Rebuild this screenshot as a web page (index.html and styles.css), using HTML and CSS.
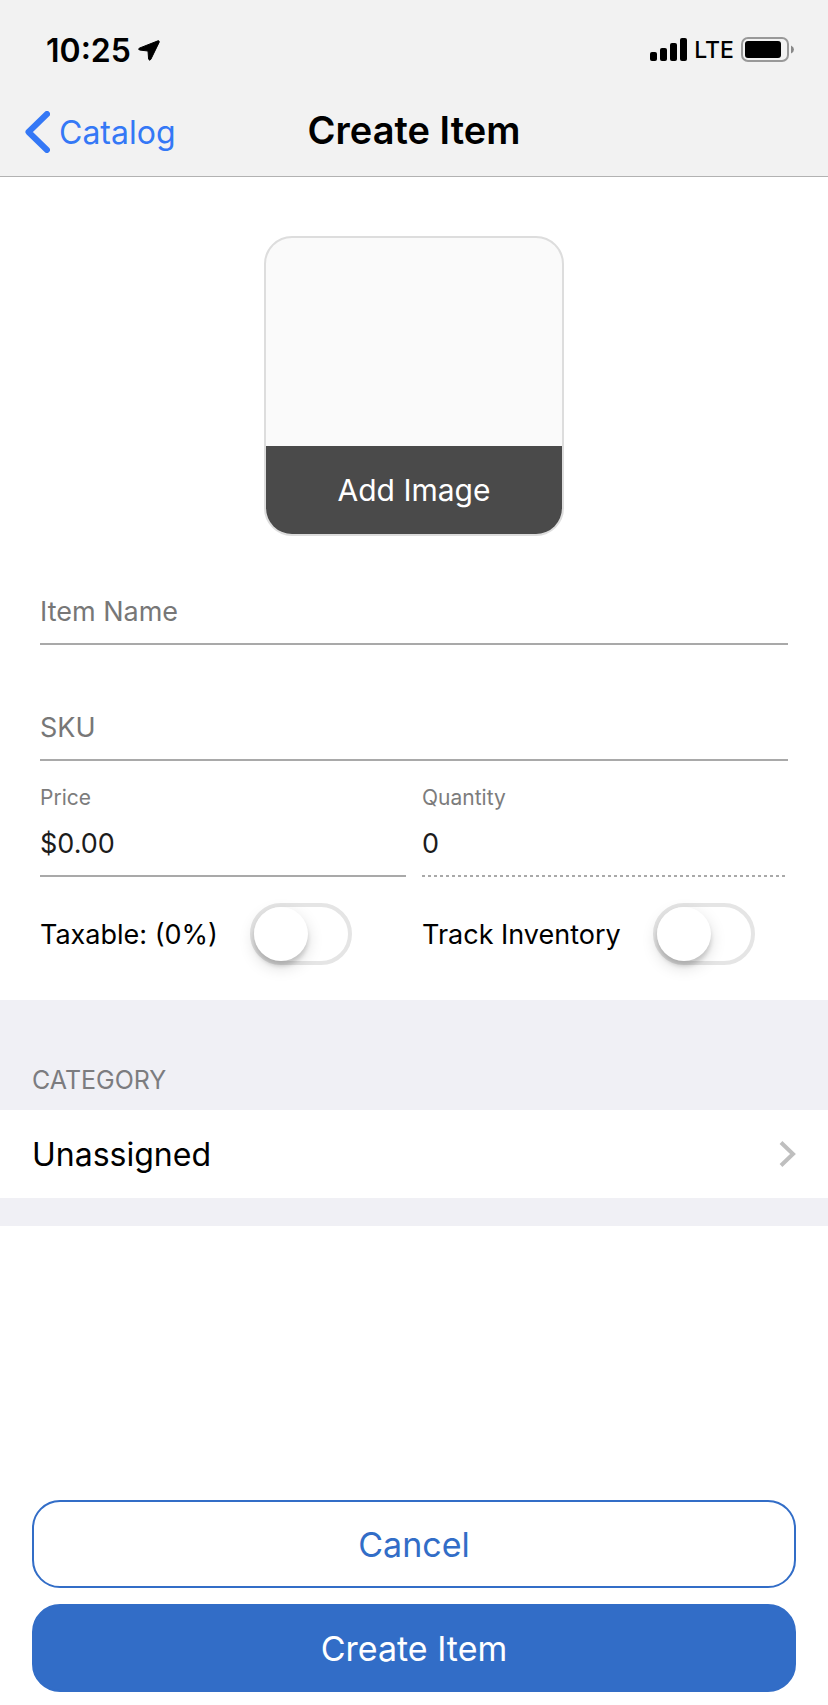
FILE: index.html
```
<!DOCTYPE html>
<html lang="en">
<head>
  <meta charset="utf-8">
  <meta name="viewport" content="width=device-width, initial-scale=1">
  <title>Create Item</title>
  <link rel="stylesheet" href="styles.css">
</head>
<body>
  <header class="top">
    <div class="status-bar">
      <div class="status-left">
        <span class="time">10:25</span>
        <svg class="location" width="22" height="21" viewBox="0 0 22 21">
          <path d="M20 .8 L1.2 8.2 Q0 9.2 1.4 10 L10 11 L10.6 19.2 Q11.6 21 12.8 19.4 L21.2 2.2 Q21.4 .4 20 .8z" stroke="#000" stroke-width="1" stroke-linejoin="round"/>
        </svg>
      </div>
      <div class="status-right">
        <svg width="37" height="24" viewBox="0 0 37 24">
          <rect x="0" y="14" width="7" height="9" rx="2"/>
          <rect x="10" y="10" width="7" height="13" rx="2"/>
          <rect x="20" y="5" width="7" height="18" rx="2"/>
          <rect x="30" y="0" width="7" height="23" rx="2"/>
        </svg>
        <span class="network">LTE</span>
        <svg width="53" height="26" viewBox="0 0 53 26">
          <rect x="1" y="1" width="46" height="23" rx="6" fill="none" stroke="#999" stroke-width="2"/>
          <rect x="4" y="4" width="36" height="17" rx="3"/>
          <path d="M50 8.5 Q53 10 53 12.5 Q53 15 50 16.5z" fill="#888"/>
        </svg>
      </div>
    </div>
    <nav class="nav-bar">
      <a class="back" href="#">
        <svg width="25" height="42" viewBox="0 0 25 42">
          <path d="M22 3 L3.5 21 L22 39" fill="none" stroke="#3478f6" stroke-width="6" stroke-linecap="round" stroke-linejoin="round"/>
        </svg>
        <span>Catalog</span>
      </a>
      <h1>Create Item</h1>
    </nav>
  </header>

  <main>
    <form class="item-form" id="item-form">
      <button class="photo" type="button"><span>Add Image</span></button>

      <div class="fields">
        <div class="field wide">
          <input type="text" aria-label="Item Name" placeholder="Item Name">
        </div>
        <div class="field wide">
          <input type="text" aria-label="SKU" placeholder="SKU">
        </div>
        <div class="field">
          <label for="price">Price</label>
          <input type="text" id="price" value="$0.00">
        </div>
        <div class="field">
          <label for="quantity">Quantity</label>
          <input class="dashed" type="text" id="quantity" value="0" readonly>
        </div>
        <div class="switch-row">
          <label for="taxable">Taxable: (0%)</label>
          <input class="switch" type="checkbox" role="switch" id="taxable">
        </div>
        <div class="switch-row">
          <label for="track">Track Inventory</label>
          <input class="switch" type="checkbox" role="switch" id="track">
        </div>
      </div>
    </form>

    <section class="category">
      <h2>CATEGORY</h2>
      <a class="category-row" href="#">
        <span>Unassigned</span>
        <svg width="17" height="28" viewBox="0 0 17 28">
          <path d="M2 2.5 L14 14 L2 25.5" fill="none" stroke="#bfbfbf" stroke-width="4"/>
        </svg>
      </a>
    </section>
  </main>

  <footer class="actions">
    <button class="btn" type="button">Cancel</button>
    <button class="btn btn-primary" type="submit" form="item-form">Create Item</button>
  </footer>
</body>
</html>
```
FILE: styles.css
```
* {
  box-sizing: border-box;
}

body {
  margin: 0;
  min-height: 100vh;
  display: flex;
  flex-direction: column;
  background: #fff;
  color: #000;
  font-family: Inter, "Liberation Sans", sans-serif;
}

button,
input {
  font: inherit;
}

a {
  text-decoration: none;
}

/* status bar + navigation */
.top {
  background: #f2f2f2;
  border-bottom: 1px solid #b2b2b2;
}

.status-bar {
  display: flex;
  justify-content: space-between;
  align-items: center;
  height: 88px;
  padding: 12px 34px 0 46px;
}

.status-left {
  display: flex;
  align-items: center;
  gap: 7px;
}

.status-right {
  display: flex;
  align-items: center;
  gap: 7px;
}

.time {
  font-size: 32px;
  font-weight: 600;
}

.network {
  font-size: 23px;
  font-weight: 500;
}

.nav-bar {
  display: grid;
  grid-template-columns: 1fr auto 1fr;
  align-items: center;
  height: 88px;
  padding: 0 25px;
}

.back {
  display: flex;
  align-items: center;
  gap: 9px;
  color: #3478f6;
  font-size: 32px;
}

.nav-bar h1 {
  margin: 0;
  padding-bottom: 4px;
  font-size: 38px;
  font-weight: 600;
}

/* item form */
.item-form {
  padding: 59px 40px 35px;
}

.photo {
  display: flex;
  flex-direction: column;
  justify-content: flex-end;
  width: 300px;
  height: 300px;
  margin: 0 auto 43px;
  padding: 0;
  overflow: hidden;
  background: #fafafa;
  border: 2px solid #ddd;
  border-radius: 28px;
}

.photo span {
  width: 100%;
  line-height: 88px;
  background: #4a4a4a;
  color: #fff;
  font-size: 30px;
}

.fields {
  display: grid;
  grid-template-columns: 1fr 1fr;
  column-gap: 16px;
}

.wide {
  grid-column: 1 / -1;
}

.wide + .wide {
  margin-top: 50px;
}

.field label {
  display: block;
  margin: 25px 0 1px;
  color: #7c7c7c;
  font-size: 21px;
  line-height: 24px;
}

.field input {
  display: block;
  width: 100%;
  height: 66px;
  padding: 0;
  border: 0;
  border-bottom: 2px solid #a9a9a9;
  border-radius: 0;
  outline: 0;
  background: none;
  color: #1c1c1c;
  font-size: 27px;
}

.field input::placeholder {
  color: #777;
  opacity: 1;
}

.field .dashed {
  border-bottom-color: transparent;
  background: repeating-linear-gradient(90deg, #a9a9a9 0 3px, transparent 3px 6px) bottom / 100% 2px no-repeat border-box;
}

.switch-row {
  display: flex;
  align-items: center;
  gap: 32px;
  margin-top: 26px;
  font-size: 27px;
}

/* toggle switch */
.switch {
  appearance: none;
  width: 102px;
  height: 62px;
  margin: 0;
  border: 4px solid #e5e5e5;
  border-radius: 31px;
  background: #fff;
}

.switch::before {
  content: "";
  display: block;
  width: 54px;
  height: 54px;
  border-radius: 50%;
  background: #fff;
  box-shadow: 0 6px 16px rgba(0, 0, 0, 0.15), 0 5px 4px rgba(0, 0, 0, 0.14);
}

.switch:checked {
  border-color: #3478f6;
  background: #3478f6;
}

.switch:checked::before {
  margin-left: 40px;
}

/* category */
.category {
  padding: 64px 0 28px;
  background: #f0f0f5;
}

.category h2 {
  margin: 0;
  padding: 0 32px 14px;
  color: #7c7c7f;
  font-size: 25px;
  font-weight: 400;
  line-height: 32px;
}

.category-row {
  display: flex;
  justify-content: space-between;
  align-items: center;
  height: 88px;
  padding: 0 32px;
  background: #fff;
  color: #000;
  font-size: 32px;
}

/* bottom buttons */
.actions {
  display: flex;
  flex-direction: column;
  gap: 16px;
  margin-top: auto;
  padding: 16px 32px 13px;
}

.btn {
  height: 88px;
  border: 2px solid #326dc7;
  border-radius: 28px;
  background: #fff;
  color: #326dc7;
  font-size: 34px;
}

.btn-primary {
  background: #326dc7;
  color: #fff;
}
```
